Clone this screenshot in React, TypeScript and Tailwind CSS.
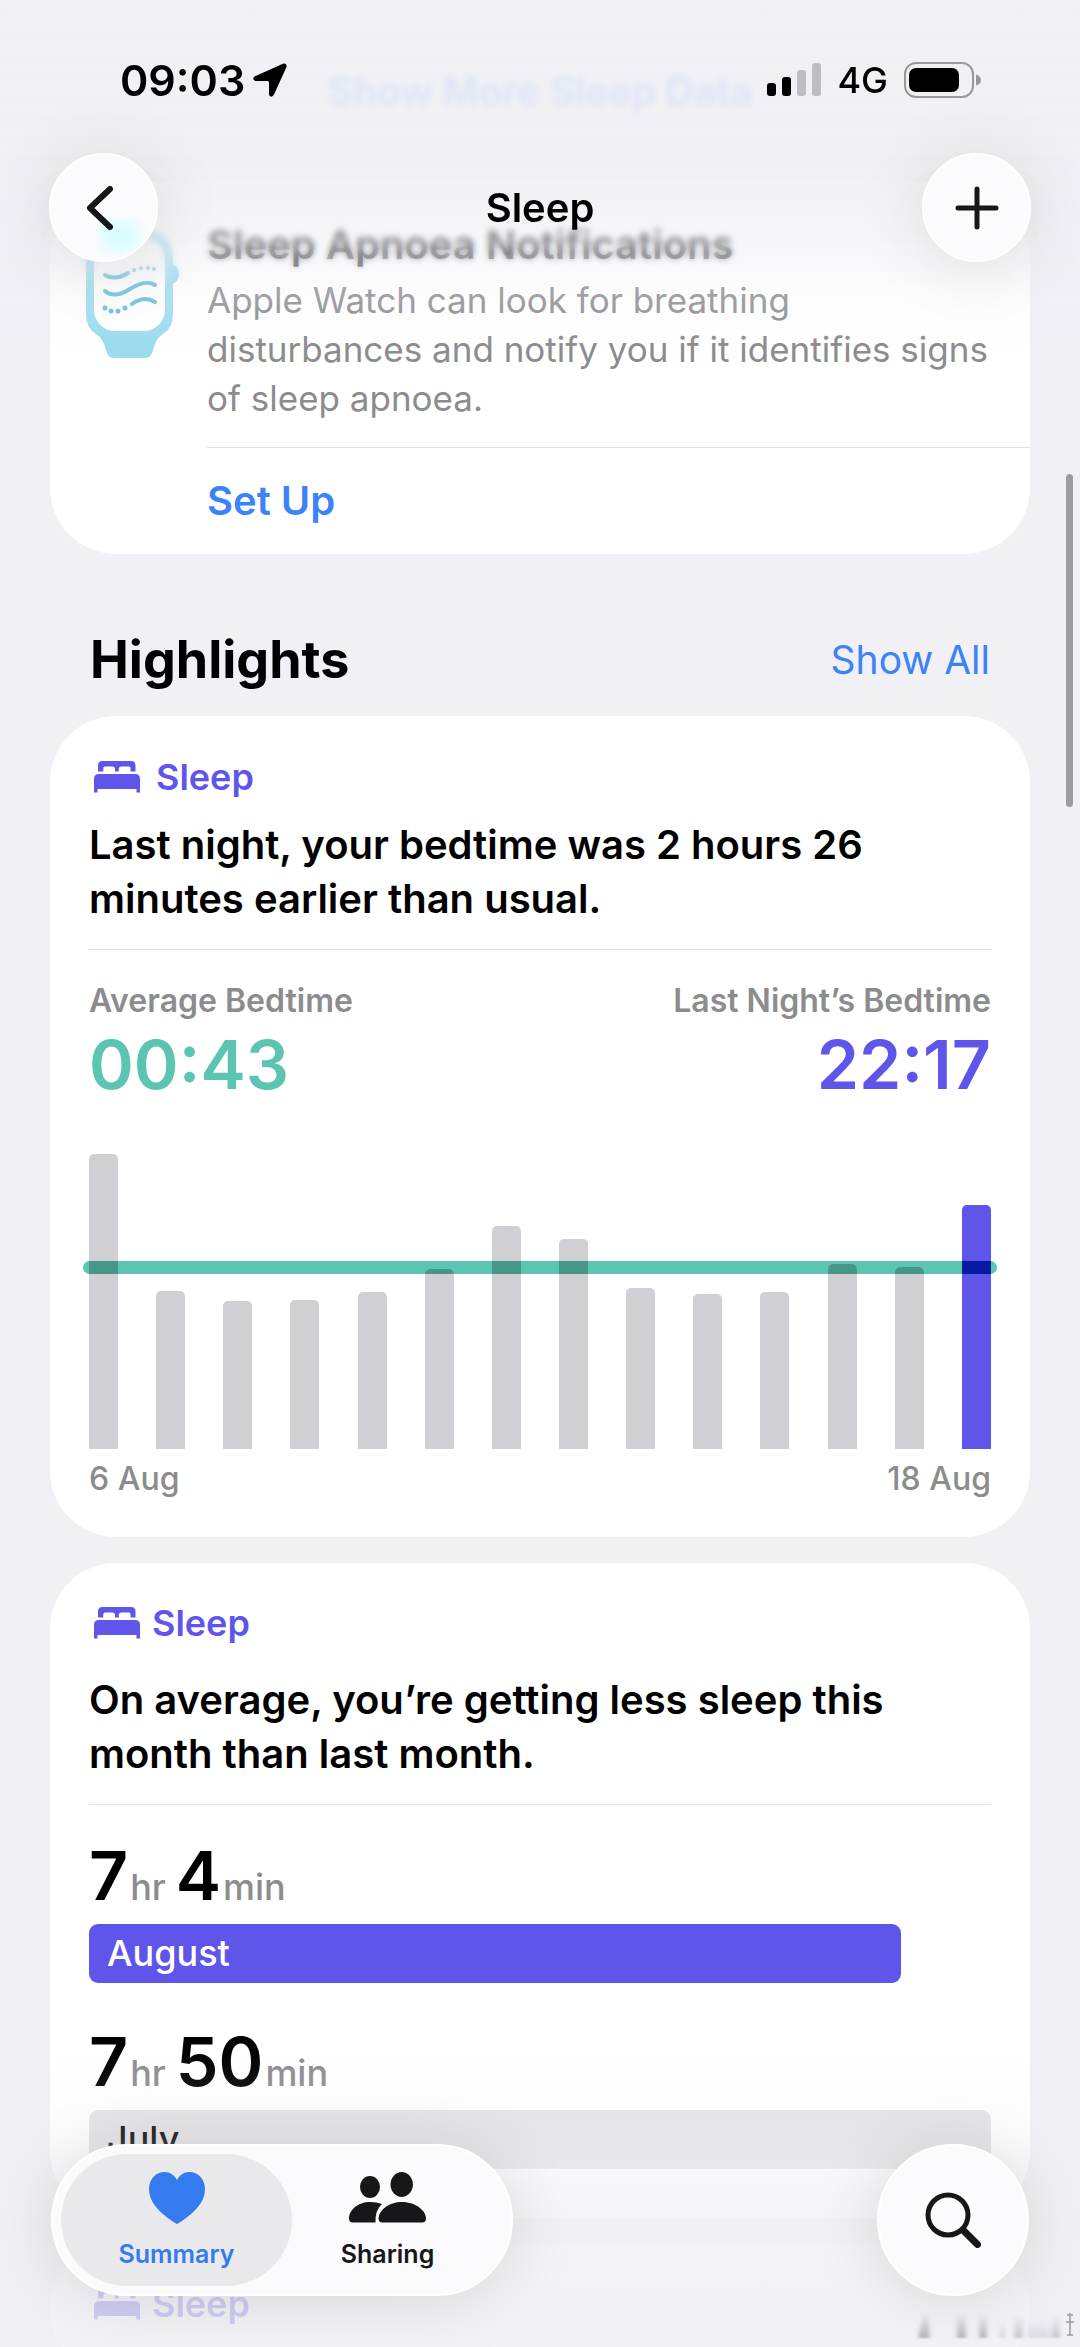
import React, { useState } from 'react';

const BEDTIMES = [295, 158, 148, 149, 157, 180, 223, 210, 161, 155, 157, 185, 182, 244];

const BedIcon: React.FC = () => (
    <svg viewBox="0 0 46 32" className="w-[46px] h-8 shrink-0" fill="currentColor" aria-hidden="true">
        <path d="M4 10.500V4.500Q4 0 8.500 0H37Q41.500 0 41.500 4.500V10.500H36.500V7Q36.500 5.500 35 5.500H27.500Q24.800 5.500 24.800 8V10.500H21V8Q21 5.500 18.300 5.500H11Q9.300 5.500 9.300 7V10.500Z" />
        <path d="M0 31.500V18Q0 13 5 13H41Q46 13 46 18V31.500H42.500V28H3.500V31.500Z" />
    </svg>
);

const WatchIcon: React.FC = () => (
    <svg viewBox="0 0 94 134" className="w-[94px] h-[134px] shrink-0" fill="none" aria-hidden="true">
        <path d="M22 12L28 0H60L66 12Z" fill="#9bdcee" />
        <path d="M84 40Q93 41 93 50Q93 59 84 60Z" fill="#8fd6ea" />
        <path d="M0 36Q0 6 30 6H57Q87 6 87 36V90Q87 104 77 110Q70 114 67 126Q65 134 60 134H27Q22 134 20 126Q17 114 10 110Q0 104 0 90Z" fill="#9bdcee" />
        <rect x="8" y="14" width="71" height="93" rx="21" fill="#fff" />
        <g stroke="#62bcd8" strokeWidth="4" strokeLinecap="round">
            <path d="M19 51Q29 57 42 49" />
            <path d="M19 67Q28 75 44 65T69 61" />
            <path d="M46 80Q58 71 69 78" />
        </g>
        <g fill="#62bcd8">
            <circle cx="48" cy="46" r="2" />
            <circle cx="55" cy="44" r="2" />
            <circle cx="62" cy="44" r="2" />
            <circle cx="68" cy="45" r="2" />
            <circle cx="19" cy="84" r="2.500" />
            <circle cx="25" cy="87" r="2.500" />
            <circle cx="32" cy="87" r="2.500" />
            <circle cx="39" cy="84" r="2.500" />
        </g>
    </svg>
);

const SleepLabel: React.FC<{ wide?: boolean }> = ({ wide }) => (
    <div className={`flex items-center h-11 pl-[5px] text-[#6055eb] ${wide ? 'gap-4' : 'gap-3'}`}>
        <BedIcon />
        <span className="text-[36px] leading-[44px] font-semibold">Sleep</span>
    </div>
);

const Duration: React.FC<{ hours: number; minutes: number }> = ({ hours, minutes }) => (
    <p className="flex items-baseline text-[68px] leading-[72px] font-semibold">
        {hours}
        <span className="text-[36px] leading-10 font-medium text-[#8c8c8e] ml-[2px] mr-[10px]">hr</span>
        {minutes}
        <span className="text-[36px] leading-10 font-medium text-[#8c8c8e] ml-[2px]">min</span>
    </p>
);

const BedtimeChart: React.FC = () => (
    <div className="relative mt-[54px]">
        {/* Average line, drawn behind the bars */}
        <div className="absolute -inset-x-[6px] bottom-[175px] h-[13px] rounded-full bg-[#5bc5b1]" />
        <div className="relative flex items-end justify-between">
            {BEDTIMES.map((height, i) => {
                const last = i === BEDTIMES.length - 1;
                return (
                    <div
                        key={i}
                        className={`relative w-[29px] rounded-t-[5px] overflow-hidden ${last ? 'bg-[#6055eb]' : 'bg-[#d0cfd3]'}`}
                        style={{ height }}
                    >
                        <div className={`absolute inset-x-0 bottom-[175px] h-[13px] ${last ? 'bg-[#061aa2]' : 'bg-[#459787]'}`} />
                    </div>
                );
            })}
        </div>
    </div>
);

const StatusBar: React.FC = () => (
    <div className="flex items-center justify-between h-[34px] pl-[120px] pr-[98px]">
        <div className="flex items-center gap-2">
            <span className="text-[43px] leading-[34px] font-semibold">09:03</span>
            <svg viewBox="0 0 34 34" className="w-[34px] h-[34px]" aria-hidden="true">
                <path d="M30.500 .5Q34 0 33.500 4L21 31.500Q18.500 35.500 16 32V19.500Q16 18 14.500 18H2.500Q-1.500 16.500 1.500 13.500Z" />
            </svg>
        </div>
        <div className="flex items-center">
            <svg viewBox="0 0 54 34" className="w-[54px] h-[34px]" aria-hidden="true">
                <rect x="0" y="20" width="9" height="13" rx="3" />
                <rect x="15" y="14" width="9" height="19" rx="3" />
                <rect x="30" y="7" width="9" height="26" rx="3" fill="#bdbdc2" />
                <rect x="45" y="0" width="9" height="33" rx="3" fill="#bdbdc2" />
            </svg>
            <span className="text-[36px] leading-[34px] font-medium ml-4">4G</span>
            <svg viewBox="0 0 78 36" className="w-[78px] h-9 ml-4" aria-hidden="true">
                <rect x="1" y="1" width="68" height="34" rx="11" fill="none" stroke="#98989c" strokeWidth="2" />
                <rect x="5" y="6" width="50" height="24" rx="7" />
                <path d="M72 12.500Q77 14 77 18T72 23.500Z" fill="#98989c" />
            </svg>
        </div>
    </div>
);

const GLASS = 'flex items-center justify-center rounded-full bg-[#fbfbfe] border-2 border-white shadow-[0_4px_70px_rgba(0,0,0,0.12)]';

export default function App() {
    const [tab, setTab] = useState('summary');

    return (
        <div className="relative h-screen overflow-hidden bg-[#f0f0f5] text-black font-['Inter','Liberation_Sans',sans-serif]">
            <main className="px-[50px]">
                <div className="flex justify-center pt-[67px] pb-[66px]">
                    <a href="#more" className="text-[39px] leading-[48px] font-semibold text-[#3b83f7]">Show More Sleep Data</a>
                </div>

                <section className="flex gap-[27px] bg-white rounded-[66px] pl-9">
                    <div className="pt-[43px]">
                        <WatchIcon />
                    </div>
                    <div className="flex-1">
                        <div className="pt-[39px] pb-6 pr-[30px]">
                            <h3 className="text-[40px] leading-[49px] font-semibold">Sleep Apnoea Notifications</h3>
                            <p className="mt-[7px] text-[35px] leading-[49px] text-[#8c8c8e]">
                                Apple Watch can look for breathing disturbances and notify you if it identifies signs of sleep apnoea.
                            </p>
                        </div>
                        <button className="w-full h-[107px] border-t border-[#e2e2e4] text-left text-[40px] font-semibold text-[#3b83f7]">
                            Set Up
                        </button>
                    </div>
                </section>

                <div className="flex items-center justify-between mt-[74px] mb-6 px-10">
                    <h2 className="text-[52px] leading-[64px] font-bold">Highlights</h2>
                    <a href="#all" className="text-[39px] leading-[48px] text-[#3b83f7]">Show All</a>
                </div>

                <section className="bg-white rounded-[66px] px-[39px] pt-[39px] pb-[38px]">
                    <SleepLabel wide />
                    <h3 className="mt-[19px] text-[40px] leading-[54px] font-semibold">
                        Last night, your bedtime was 2 hours 26 minutes earlier than usual.
                    </h3>
                    <div className="flex justify-between mt-[23px] pt-[31px] border-t border-[#dcdcde]">
                        <div>
                            <p className="text-[32px] leading-10 font-semibold text-[#8c8c8e]">Average Bedtime</p>
                            <p className="mt-[7px] text-[68px] leading-[72px] font-semibold text-[#5bc5b1]">00:43</p>
                        </div>
                        <div className="text-right">
                            <p className="text-[32px] leading-10 font-semibold text-[#8c8c8e]">Last Night’s Bedtime</p>
                            <p className="mt-[7px] text-[68px] leading-[72px] font-semibold text-[#6055eb]">22:17</p>
                        </div>
                    </div>
                    <BedtimeChart />
                    <div className="flex justify-between mt-[10px] text-[32px] leading-10 font-medium text-[#8c8c8e]">
                        <span>6 Aug</span>
                        <span>18 Aug</span>
                    </div>
                </section>

                <section className="mt-[26px] bg-white rounded-[66px] px-[39px] pt-[38px] pb-[49px]">
                    <SleepLabel />
                    <h3 className="mt-7 text-[40px] leading-[54px] font-semibold">
                        On average, you’re getting less sleep this month than last month.
                    </h3>
                    <div className="mt-[23px] pt-[34px] border-t border-[#e2e2e4]">
                        <Duration hours={7} minutes={4} />
                        <div className="mt-[13px] w-[90%] h-[59px] pl-[18px] rounded-[9px] bg-[#6055eb] text-[36px] leading-[59px] font-medium text-white">
                            August
                        </div>
                    </div>
                    <div className="mt-[42px]">
                        <Duration hours={7} minutes={50} />
                        <div className="mt-[13px] h-[59px] pl-[18px] rounded-[9px] bg-[#e4e4e6] text-[36px] leading-[59px] font-medium">
                            July
                        </div>
                    </div>
                </section>

                <section className="mt-[26px] bg-white rounded-[66px] px-[39px] pt-[38px] pb-[49px]">
                    <SleepLabel />
                </section>
            </main>

            {/* Scroll edge: content blurs and fades under the title bar */}
            <div className="pointer-events-none absolute inset-x-0 top-0 h-[285px] backdrop-blur-[3px] mask-b-from-85%" />
            <div className="pointer-events-none absolute inset-x-0 top-0 h-[350px] bg-[linear-gradient(to_bottom,#f0f0f5e0_0%,#f0f0f5e8_48%,#f0f0f5a0_66%,#f0f0f540_82%,#f0f0f500_100%)]" />

            <header className="absolute inset-x-0 top-0 pt-[63px]">
                <StatusBar />
                <div className="flex items-center justify-between px-[49px] mt-14">
                    <button aria-label="Back" className={`${GLASS} relative overflow-clip size-[109px]`}>
                        <span className="absolute right-4 bottom-2 w-10 h-8 rounded-xl bg-[#dcfdff] blur-[4px]" />
                        <svg viewBox="0 0 28 46" className="relative w-7 h-[46px] mr-2" fill="none" stroke="#16171a" strokeWidth="6" strokeLinecap="round" strokeLinejoin="round" aria-hidden="true">
                            <path d="M24 4L4 23L24 42" />
                        </svg>
                    </button>
                    <h1 className="text-[40px] leading-[48px] font-semibold">Sleep</h1>
                    <button aria-label="Add" className={`${GLASS} size-[109px]`}>
                        <svg viewBox="0 0 44 44" className="size-11" fill="none" stroke="#16171a" strokeWidth="5" strokeLinecap="round" aria-hidden="true">
                            <path d="M22 3V41M3 22H41" />
                        </svg>
                    </button>
                </div>
            </header>

            <div className="pointer-events-none absolute right-[7px] top-[474px] w-[7px] h-[333px] rounded-full bg-[#9d9da1]" />

            <div className="pointer-events-none absolute inset-x-0 bottom-0 h-[300px] bg-[linear-gradient(to_bottom,#f0f0f500_0%,#f0f0f530_30%,#f0f0f590_48%,#f0f0f5c0_66%,#f0f0f5c8_100%)]" />

            <footer className="absolute inset-x-0 bottom-0 flex items-end justify-between px-[51px] pb-[51px]">
                <nav className={`${GLASS} h-[152px] px-2`}>
                    <button
                        onClick={() => setTab('summary')}
                        className={`flex flex-col items-center justify-center w-[231px] h-[132px] rounded-full text-[#347bf0] ${tab === 'summary' ? 'bg-[#e9e9ec]' : ''}`}
                    >
                        <svg viewBox="0 0 56 52" className="w-14 h-[52px]" fill="currentColor" aria-hidden="true">
                            <path d="M28 52Q26 51 23 49C10 40 0 30 0 17C0 7 7 0 15.500 0C21 0 25.500 3 28 8C30.500 3 35 0 40.500 0C49 0 56 7 56 17C56 30 46 40 33 49Q30 51 28 52Z" />
                        </svg>
                        <span className="mt-4 text-[25px] leading-7 font-semibold">Summary</span>
                    </button>
                    <button
                        onClick={() => setTab('sharing')}
                        className={`flex flex-col items-center justify-center w-[231px] h-[132px] -ml-5 rounded-full text-[#17171a] ${tab === 'sharing' ? 'bg-[#e9e9ec]' : ''}`}
                    >
                        <svg viewBox="0 0 77 52" className="w-[77px] h-[52px]" fill="currentColor" aria-hidden="true">
                            <ellipse cx="21" cy="15" rx="10" ry="11" />
                            <ellipse cx="52.700" cy="12.500" rx="11.200" ry="12.500" />
                            <path d="M33 32Q26 38 26.500 50.500H4Q0 50.500 0 46.500C0 38 9 30 21 30Q28 30 33 32Z" />
                            <path d="M33.500 50.500Q29.500 50.500 29.500 46.500C30 38 40 30 53 30C67 30 77 39 77 46.500Q77 50.500 73 50.500Z" />
                        </svg>
                        <span className="mt-4 text-[25px] leading-7 font-semibold">Sharing</span>
                    </button>
                </nav>
                <button aria-label="Search" className={`${GLASS} size-[152px]`}>
                    <svg viewBox="0 0 56 56" className="size-14" fill="none" stroke="#16171a" strokeLinecap="round" aria-hidden="true">
                        <circle cx="23" cy="23" r="20" strokeWidth="5" />
                        <path d="M39 39L52.500 52.500" strokeWidth="7" />
                    </svg>
                </button>
            </footer>

            {/* Smudged mark in the corner */}
            <svg viewBox="0 0 160 32" className="pointer-events-none absolute right-1 bottom-2 w-40 h-8" aria-hidden="true">
                <defs>
                    <linearGradient id="smudge" x1="0" y1="0" x2="0" y2="1">
                        <stop offset="0" stopColor="#8a8a8e" stopOpacity="0" />
                        <stop offset="1" stopColor="#8a8a8e" stopOpacity="0.6" />
                    </linearGradient>
                    <filter id="soften">
                        <feGaussianBlur stdDeviation="2 1" />
                    </filter>
                </defs>
                <g fill="url(#smudge)" filter="url(#soften)">
                    <path d="M2 31L8 4H12L14 31Z" />
                    <rect x="41" y="6" width="9" height="25" />
                    <rect x="63" y="6" width="8" height="25" />
                    <rect x="84" y="14" width="5" height="17" opacity="0.500" />
                    <rect x="98" y="8" width="9" height="23" opacity="0.700" />
                    <rect x="112" y="12" width="22" height="19" opacity="0.350" />
                    <rect x="136" y="8" width="8" height="23" opacity="0.700" />
                </g>
                <path d="M151 8H157M154 6V28M150 15H158M151 28H157" stroke="#9a9a9e" strokeWidth="1.500" />
            </svg>
        </div>
    );
}
